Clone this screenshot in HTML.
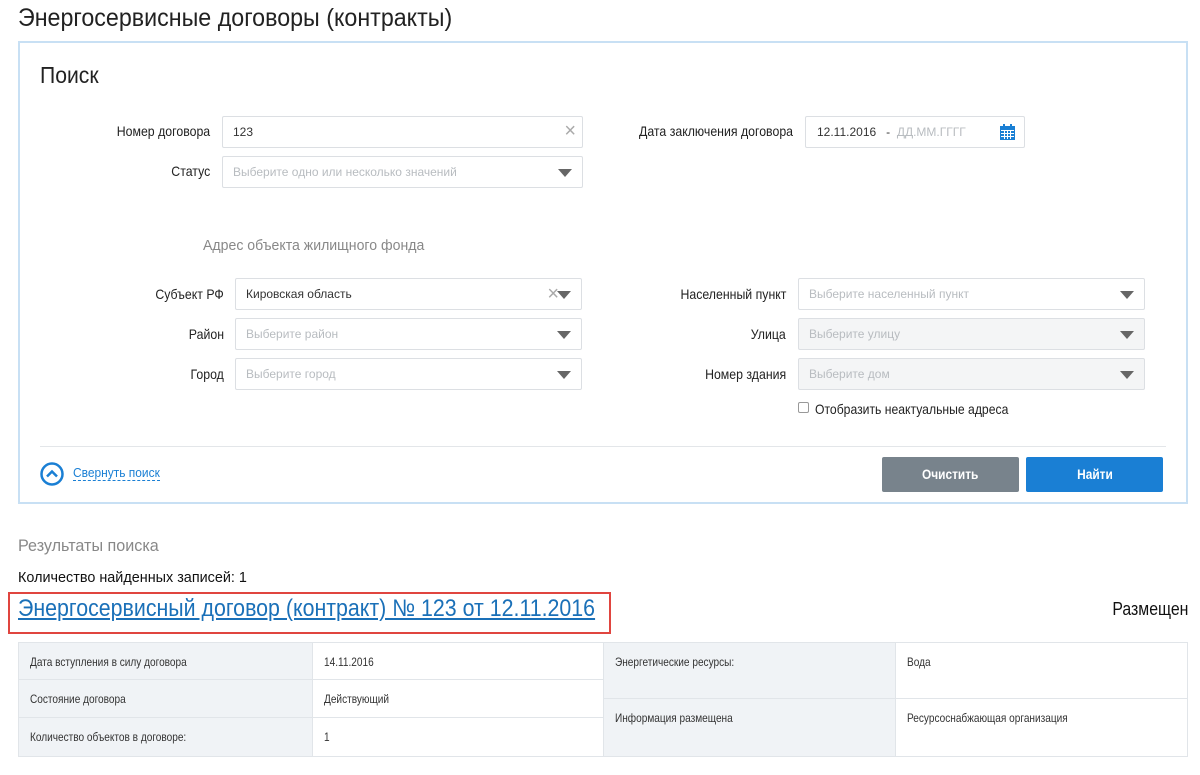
<!DOCTYPE html><html><head><meta charset="utf-8"><style>
*{box-sizing:border-box;margin:0;padding:0}
body{width:1200px;height:775px;background:#fff;font-family:"Liberation Sans",sans-serif;color:#222;position:relative;overflow:hidden}
.a{position:absolute;white-space:nowrap}
.c{display:inline-block;transform:scaleX(.88);transform-origin:left center}
.cr{display:inline-block;transform:scaleX(.88);transform-origin:right center}
.lbl{font-size:14px;color:#222;text-align:right}
.in{position:absolute;height:32px;border:1px solid #dcdfe3;border-radius:2px;background:#fff;font-size:12px;padding:0 10px;line-height:30px;color:#333}
.ph{color:#b8bcc0}
.dis{background:#f4f5f6}
.tri{position:absolute;right:10px;top:12px;width:0;height:0;border-left:7px solid transparent;border-right:7px solid transparent;border-top:8px solid #666}
.x{position:absolute;font-size:20px;color:#aaa;font-weight:300;line-height:28px}
.t{position:absolute;font-size:12px;color:#333;padding:12px 11px 0;white-space:nowrap}
.t span{display:inline-block;transform:scaleX(.84);transform-origin:left center}
</style></head><body>
<div class="a" style="left:18px;top:4px;font-size:25px;color:#222"><span class="c" style="transform:scaleX(.93)">Энергосервисные договоры (контракты)</span></div>
<div class="a" style="left:18px;top:41px;width:1170px;height:463px;border:2px solid #c8e0f4"></div>
<div class="a" style="left:40px;top:62px;font-size:23px;color:#222"><span class="c" style="transform:scaleX(.92)">Поиск</span></div>

<div class="a lbl" style="left:100px;width:110px;top:123px"><span class="cr">Номер договора</span></div>
<div class="in" style="left:222px;top:116px;width:361px">123<span class="x" style="right:6px;top:0">×</span></div>
<div class="a lbl" style="left:100px;width:110px;top:163px"><span class="cr">Статус</span></div>
<div class="in ph" style="left:222px;top:156px;width:361px">Выберите одно или несколько значений<span class="tri"></span></div>

<div class="a lbl" style="left:600px;width:193px;top:123px"><span class="cr">Дата заключения договора</span></div>
<div class="in" style="left:805px;top:116px;width:220px;padding-left:11px">12.11.2016 &nbsp; - &nbsp;<span class="ph">ДД.ММ.ГГГГ</span>
<svg style="position:absolute;right:9px;top:7px" width="15" height="16" viewBox="0 0 15 16"><rect x="0" y="2" width="15" height="14" fill="#1a7fd4"/><rect x="3" y="0" width="2" height="4" fill="#1a7fd4"/><rect x="10" y="0" width="2" height="4" fill="#1a7fd4"/><g fill="#fff"><rect x="1" y="6" width="13" height="1"/><rect x="1" y="9" width="13" height="1"/><rect x="1" y="12" width="13" height="1"/><rect x="4" y="6" width="1" height="9"/><rect x="7" y="6" width="1" height="9"/><rect x="10" y="6" width="1" height="9"/></g></svg></div>

<div class="a" style="left:203px;top:237px;font-size:15px;color:#888"><span class="c" style="transform:scaleX(.94)">Адрес объекта жилищного фонда</span></div>

<div class="a lbl" style="left:100px;width:124px;top:286px"><span class="cr">Субъект РФ</span></div>
<div class="in" style="left:235px;top:278px;width:347px">Кировская область<span class="x" style="right:22px;top:1px">×</span><span class="tri"></span></div>
<div class="a lbl" style="left:100px;width:124px;top:326px"><span class="cr">Район</span></div>
<div class="in ph" style="left:235px;top:318px;width:347px">Выберите район<span class="tri"></span></div>
<div class="a lbl" style="left:100px;width:124px;top:366px"><span class="cr">Город</span></div>
<div class="in ph" style="left:235px;top:358px;width:347px">Выберите город<span class="tri"></span></div>

<div class="a lbl" style="left:640px;width:146px;top:286px"><span class="cr">Населенный пункт</span></div>
<div class="in ph" style="left:798px;top:278px;width:347px">Выберите населенный пункт<span class="tri"></span></div>
<div class="a lbl" style="left:640px;width:146px;top:326px"><span class="cr">Улица</span></div>
<div class="in ph dis" style="left:798px;top:318px;width:347px">Выберите улицу<span class="tri"></span></div>
<div class="a lbl" style="left:640px;width:146px;top:366px"><span class="cr">Номер здания</span></div>
<div class="in ph dis" style="left:798px;top:358px;width:347px">Выберите дом<span class="tri"></span></div>
<div class="a" style="left:798px;top:402px;width:11px;height:11px;border:1px solid #999;border-radius:2px"></div>
<div class="a" style="left:815px;top:401px;font-size:14px"><span class="c" style="transform:scaleX(.87)">Отобразить неактуальные адреса</span></div>

<div class="a" style="left:40px;top:446px;width:1126px;height:1px;background:#e3e6e9"></div>
<svg class="a" style="left:40px;top:462px" width="24" height="24" viewBox="0 0 24 24"><circle cx="12" cy="12" r="10.5" fill="none" stroke="#1a7fd4" stroke-width="2.5"/><path d="M7 14.5 L12 9.5 L17 14.5" fill="none" stroke="#1a7fd4" stroke-width="2.5"/></svg>
<div class="a" style="left:73px;top:465px;font-size:13px;color:#1a7fd4;border-bottom:1px dashed #1a7fd4;line-height:15px;width:87px"><span class="c" style="transform:scaleX(.92)">Свернуть поиск</span></div>
<div class="a" style="left:882px;top:457px;width:137px;height:35px;background:#78838c;border-radius:2px;color:#fff;font-size:14px;font-weight:bold;text-align:center;line-height:35px"><span style="display:inline-block;transform:scaleX(.85)">Очистить</span></div>
<div class="a" style="left:1026px;top:457px;width:137px;height:35px;background:#1a7fd4;border-radius:2px;color:#fff;font-size:14px;font-weight:bold;text-align:center;line-height:35px"><span style="display:inline-block;transform:scaleX(.85)">Найти</span></div>

<div class="a" style="left:18px;top:536px;font-size:17px;color:#888"><span class="c" style="transform:scaleX(.95)">Результаты поиска</span></div>
<div class="a" style="left:18px;top:569px;font-size:15px;color:#111"><span class="c" style="transform:scaleX(.96)">Количество найденных записей: 1</span></div>
<div class="a" style="left:8px;top:592px;width:603px;height:42px;border:2px solid #e0453f"></div>
<div class="a" style="left:18px;top:595px;font-size:24px;color:#1a70b8;text-decoration:underline"><span class="c" style="transform:scaleX(.89);text-decoration:underline">Энергосервисный договор (контракт) № 123 от 12.11.2016</span></div>
<div class="a" style="right:12px;top:599px;font-size:18px;color:#111"><span class="cr">Размещен</span></div>

<div class="a" style="left:18px;top:642px;width:1170px;height:115px;border:1px solid #e1e5e9"></div>
<div class="t" style="left:19px;top:643px;width:293px;height:37px;background:#f0f3f6;border-bottom:1px solid #e1e5e9"><span>Дата вступления в силу договора</span></div>
<div class="t" style="left:19px;top:680px;width:293px;height:38px;background:#f0f3f6;border-bottom:1px solid #e1e5e9"><span>Состояние договора</span></div>
<div class="t" style="left:19px;top:718px;width:293px;height:38px;background:#f0f3f6"><span>Количество объектов в договоре:</span></div>
<div class="t" style="left:312px;top:643px;width:291px;height:37px;border-left:1px solid #e1e5e9;border-bottom:1px solid #e1e5e9"><span>14.11.2016</span></div>
<div class="t" style="left:312px;top:680px;width:291px;height:38px;border-left:1px solid #e1e5e9;border-bottom:1px solid #e1e5e9"><span>Действующий</span></div>
<div class="t" style="left:312px;top:718px;width:291px;height:38px;border-left:1px solid #e1e5e9"><span>1</span></div>
<div class="t" style="left:603px;top:643px;width:292px;height:56px;background:#f0f3f6;border-left:1px solid #e1e5e9;border-bottom:1px solid #e1e5e9"><span>Энергетические ресурсы:</span></div>
<div class="t" style="left:603px;top:699px;width:292px;height:57px;background:#f0f3f6;border-left:1px solid #e1e5e9"><span>Информация размещена</span></div>
<div class="t" style="left:895px;top:643px;width:292px;height:56px;border-left:1px solid #e1e5e9;border-bottom:1px solid #e1e5e9"><span>Вода</span></div>
<div class="t" style="left:895px;top:699px;width:292px;height:57px;border-left:1px solid #e1e5e9"><span>Ресурсоснабжающая организация</span></div>
</body></html>
